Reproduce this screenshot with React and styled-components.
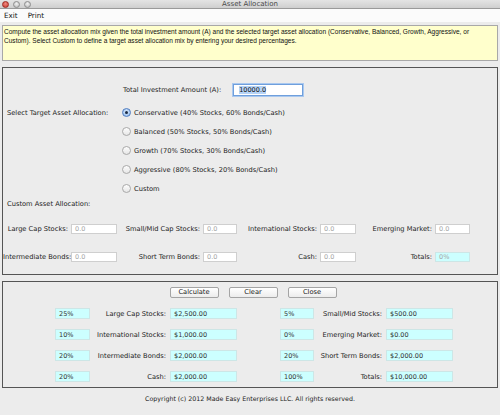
import React from 'react'
import styled, { createGlobalStyle } from 'styled-components'

const GlobalStyle = createGlobalStyle`
  html, body {
    margin: 0;
    padding: 0;
    background: #ececec;
  }
  body {
    font-family: "DejaVu Sans", "Lucida Grande", sans-serif;
    color: #222;
  }
`

const Window = styled.div`
  width: 500px;
  height: 415px;
  overflow: hidden;
  background: #ececec;
`

const TitleBar = styled.div`
  position: relative;
  height: 8px;
  background: linear-gradient(#e4e4e4, #cfcfcf);
  border-bottom: 1px solid #9a9a9a;
  display: flex;
  align-items: center;
  justify-content: center;
  font-size: 7px;
  color: #4a4a4a;
`

const Lights = styled.div`
  position: absolute;
  left: 2px;
  top: 1px;
  display: flex;
  gap: 4px;
`

const Light = styled.span`
  width: 7px;
  height: 7px;
  border-radius: 50%;
  background: ${p => (p.$red ? 'radial-gradient(circle at 50% 35%, #f08a80, #c8372c)' : 'radial-gradient(circle at 50% 35%, #f2f2f2, #b5b5b5)')};
  border: 0.5px solid ${p => (p.$red ? '#9b2a22' : '#8e8e8e')};
  box-sizing: border-box;
`

const MenuBar = styled.div`
  height: 13px;
  background: #fbfbfb;
  display: flex;
  align-items: center;
  gap: 10px;
  padding-left: 4px;
  font-size: 7.2px;
  color: #111;
`

const Description = styled.div`
  margin: 3px 2px 0;
  height: 36px;
  padding: 2px 1px;
  box-sizing: border-box;
  background: #ffffcc;
  border: 1px solid #a8a8a8;
  font-family: "Liberation Sans", Arial, sans-serif;
  font-size: 6.55px;
  line-height: 8.5px;
  white-space: nowrap;
  color: #111;
`

const Panel = styled.div`
  margin: ${p => p.$top}px 2px 0;
  height: ${p => p.$height}px;
  box-sizing: border-box;
  border: 1px solid #555;
  padding-top: ${p => p.$pad}px;
  font-size: 6.7px;
`

const InvestRow = styled.div`
  display: flex;
  align-items: center;
  height: 13px;
  padding-left: 120px;
  gap: 12px;
`

const Field = styled.div`
  box-sizing: border-box;
  height: ${p => p.$h || 10}px;
  width: ${p => (p.$w ? `${p.$w}px` : 'auto')};
  margin-left: ${p => p.$ml || 0}px;
  background: ${p => (p.$cyan ? '#ccffff' : '#fff')};
  border: 1px solid ${p => (p.$cyan ? '#cde6e6' : '#cfcfcf')};
  color: ${p => (p.$muted ? '#a6a6a6' : '#333')};
  display: flex;
  align-items: center;
  padding-left: 3px;
  font-size: 6.5px;
`

const FocusField = styled(Field)`
  border: 1px solid #6f9fdc;
  box-shadow: 0 0 0 1px #a9c8ef;
  color: #111;
  padding-left: 5px;
`

const Selected = styled.span`
  background: #b5d3f7;
`

const AllocGrid = styled.div`
  display: grid;
  grid-template-columns: 119px 1fr;
  margin-top: 7px;
`

const SideLabel = styled.div`
  height: 19px;
  display: flex;
  align-items: center;
  padding-left: 4px;
`

const RadioList = styled.div`
  display: flex;
  flex-direction: column;
`

const RadioRow = styled.div`
  height: 19px;
  display: flex;
  align-items: center;
  gap: 3px;
`

const Radio = styled.span`
  width: 9px;
  height: 9px;
  box-sizing: border-box;
  border-radius: 50%;
  border: 1px solid ${p => (p.$on ? '#4f7cc0' : '#a9a9a9')};
  background: ${p => (p.$on ? 'radial-gradient(circle at 50% 40%, #d9e9fb, #8fb8ec)' : 'linear-gradient(#fdfdfd, #e6e6e6)')};
  display: flex;
  align-items: center;
  justify-content: center;
  &::after {
    content: '';
    width: 3px;
    height: 3px;
    border-radius: 50%;
    background: ${p => (p.$on ? '#1a2a44' : 'transparent')};
  }
`

const SectionTitle = styled.div`
  height: 12px;
  display: flex;
  align-items: center;
  padding-left: 4px;
`

const CustomGrid = styled.div`
  display: grid;
  grid-template-columns: 65px 49px 83px 37px 80px 39px 76px 38px;
  row-gap: 18px;
  margin-top: 14px;
  align-items: center;
`

const Label = styled.div`
  text-align: right;
  white-space: nowrap;
`

const ButtonRow = styled.div`
  display: flex;
  justify-content: center;
  gap: 10px;
  padding-left: 6px;
`

const Button = styled.button`
  width: 49px;
  height: 11px;
  padding: 0;
  box-sizing: border-box;
  border: 1px solid #a4a4a4;
  border-radius: 2px;
  background: linear-gradient(#ffffff, #ececec);
  font-family: "DejaVu Sans", sans-serif;
  font-size: 6.7px;
  color: #222;
  line-height: 9px;
`

const ResultGrid = styled.div`
  display: grid;
  grid-template-columns: 52px 35px 76px 71px 43px 34px 68px 71px;
  grid-auto-rows: 11px;
  row-gap: 10px;
  margin-top: 10px;
  align-items: center;
`

const Copyright = styled.div`
  margin-top: 7px;
  text-align: center;
  font-size: 6.3px;
  color: #222;
`

const radios = [
  'Conservative (40% Stocks, 60% Bonds/Cash)',
  'Balanced (50% Stocks, 50% Bonds/Cash)',
  'Growth (70% Stocks, 30% Bonds/Cash)',
  'Aggressive (80% Stocks, 20% Bonds/Cash)',
  'Custom',
]

const customRows = [
  [['Large Cap Stocks:', '0.0'], ['Small/Mid Cap Stocks:', '0.0'], ['International Stocks:', '0.0'], ['Emerging Market:', '0.0']],
  [['Intermediate Bonds:', '0.0'], ['Short Term Bonds:', '0.0'], ['Cash:', '0.0'], ['Totals:', '0%', true]],
]

const results = [
  ['25%', 'Large Cap Stocks:', '$2,500.00', '5%', 'Small/Mid Stocks:', '$500.00'],
  ['10%', 'International Stocks:', '$1,000.00', '0%', 'Emerging Market:', '$0.00'],
  ['20%', 'Intermediate Bonds:', '$2,000.00', '20%', 'Short Term Bonds:', '$2,000.00'],
  ['20%', 'Cash:', '$2,000.00', '100%', 'Totals:', '$10,000.00'],
]

const App = () => {
  return (
    <Window>
      <GlobalStyle />
      <TitleBar>
        <Lights>
          <Light $red />
          <Light />
          <Light />
        </Lights>
        Asset Allocation
      </TitleBar>
      <MenuBar>
        <span>Exit</span>
        <span>Print</span>
      </MenuBar>
      <Description>
        Compute the asset allocation mix given the total investment amount (A) and the selected target asset allocation (Conservative, Balanced, Growth, Aggressive, or
        <br />
        Custom). Select Custom to define a target asset allocation mix by entering your desired percentages.
      </Description>

      <Panel $top={6} $height={208} $pad={15}>
        <InvestRow>
          <span>Total Investment Amount (A):</span>
          <FocusField $w={70} $h={12}>
            <Selected>10000.0</Selected>
          </FocusField>
        </InvestRow>
        <AllocGrid>
          <SideLabel>Select Target Asset Allocation:</SideLabel>
          <RadioList>
            {radios.map((r, i) => (
              <RadioRow key={r}>
                <Radio $on={i === 0} />
                {r}
              </RadioRow>
            ))}
          </RadioList>
        </AllocGrid>
        <SectionTitle>Custom Asset Allocation:</SectionTitle>
        <CustomGrid>
          {customRows.map(row =>
            row.map(([label, val, cyan]) => (
              <React.Fragment key={label}>
                <Label>{label}</Label>
                <Field $ml={3} $muted $cyan={cyan}>{val}</Field>
              </React.Fragment>
            ))
          )}
        </CustomGrid>
      </Panel>

      <Panel $top={6} $height={107} $pad={5}>
        <ButtonRow>
          <Button>Calculate</Button>
          <Button>Clear</Button>
          <Button>Close</Button>
        </ButtonRow>
        <ResultGrid>
          {results.map(([p1, l1, v1, p2, l2, v2]) => (
            <React.Fragment key={l1}>
              <span />
              <Field $cyan $h={11}>{p1}</Field>
              <Label>{l1}</Label>
              <Field $cyan $h={11} $ml={4}>{v1}</Field>
              <span />
              <Field $cyan $h={11}>{p2}</Field>
              <Label>{l2}</Label>
              <Field $cyan $h={11} $ml={4}>{v2}</Field>
            </React.Fragment>
          ))}
        </ResultGrid>
      </Panel>
      <Copyright>Copyright (c) 2012 Made Easy Enterprises LLC. All rights reserved.</Copyright>
    </Window>
  )
}

export default App
